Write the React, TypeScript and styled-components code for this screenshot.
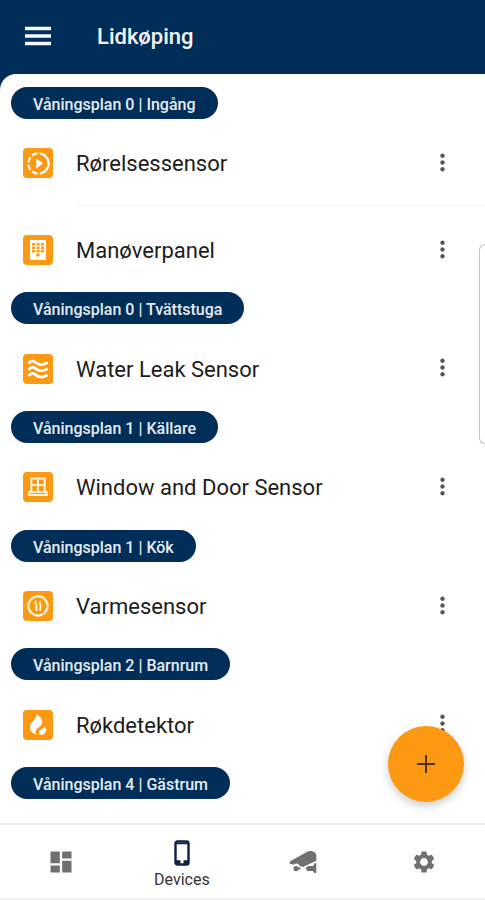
import React from "react";
import styled, { createGlobalStyle } from "styled-components";
import { MdDashboard, MdMoreVert, MdSettings, MdSlowMotionVideo } from "react-icons/md";

const navy = "#002e58";
const orange = "#fb9a12";

const GlobalStyle = createGlobalStyle`
  *, *::before, *::after { box-sizing: border-box; }
  body { margin: 0; background: #fff; font-family: Roboto, sans-serif; }
  button { border: 0; padding: 0; background: none; font: inherit; color: inherit; cursor: pointer; }
  h1, h2, ul { margin: 0; padding: 0; }
  ul { list-style: none; }
  svg { display: block; }
`;

const Screen = styled.div`
  display: flex;
  flex-direction: column;
  min-height: 100vh;
  overflow: hidden;
  background: ${navy};
`;

const Header = styled.header`
  display: flex;
  align-items: center;
  gap: 46px;
  height: 74px;
  padding: 0 25px;
  color: #f6f8fb;
`;

const MenuButton = styled.button`
  display: grid;
  place-items: center;
  width: 26px;
  height: 26px;
`;

const Title = styled.h1`
  font-size: 22px;
  line-height: 28px;
  font-weight: 500;
`;

const Main = styled.main`
  position: relative;
  flex: 1;
  display: flex;
  flex-direction: column;
  padding: 13px 0 24px;
  border-top-left-radius: 16px;
  background: #fff;
`;

const Section = styled.section<{ $rows: number }>`
  display: flex;
  flex-direction: column;
  flex: ${(p) => p.$rows} 0 auto;
`;

const Pill = styled.h2`
  align-self: flex-start;
  height: 32px;
  margin-left: 11px;
  padding: 2px 22px 0;
  border-radius: 16px;
  background: ${navy};
  color: #e6edf3;
  font-size: 16px;
  line-height: 32px;
  font-weight: 500;
`;

const DeviceList = styled.ul`
  flex: 1;
  display: flex;
  flex-direction: column;
`;

const Device = styled.li`
  flex: 1;
  display: flex;
  align-items: center;
  min-height: 86px;
  padding: 2px 30px 0 23px;
`;

const Divider = styled.li`
  height: 1px;
  margin: -1px 0 0 76px;
  background: #f5f5f5;
`;

const Tile = styled.span`
  display: grid;
  place-items: center;
  width: 30px;
  height: 30px;
  margin-right: 23px;
  border-radius: 4px;
  background: ${orange};
  color: #fff;
`;

const DeviceName = styled.span`
  flex: 1;
  padding-top: 2px;
  font-size: 22px;
  line-height: 28px;
  color: #1c1c1c;
`;

const MoreButton = styled.button`
  display: grid;
  place-items: center;
  width: 26px;
  height: 40px;
  padding-bottom: 2px;
  color: #555;
`;

const AddButton = styled.button`
  position: absolute;
  right: 21px;
  bottom: 21px;
  display: grid;
  place-items: center;
  width: 76px;
  height: 76px;
  border-radius: 50%;
  background: ${orange};
  color: #4e2d08;
  box-shadow: 0 4px 8px rgba(0, 0, 0, 0.2);
`;

const SideDrawer = styled.aside`
  position: absolute;
  top: 170px;
  right: 0;
  width: 6px;
  height: 200px;
  border: 1px solid #c4c4c4;
  border-right: 0;
  border-radius: 8px 0 0 8px;
  background: #fff;
`;

const Nav = styled.nav`
  display: grid;
  grid-template-columns: repeat(4, 1fr);
  height: 77px;
  border-top: 2px solid #ebebeb;
  border-bottom: 2px solid #f0f0f0;
  background: #fff;
`;

const NavItem = styled.button<{ $active?: boolean }>`
  display: flex;
  flex-direction: column;
  align-items: center;
  justify-content: center;
  gap: 4px;
  padding-top: ${(p) => (p.$active ? "6px" : "0")};
  color: ${(p) => (p.$active ? "#0b1f47" : "#707070")};
`;

const NavLabel = styled.span`
  font-size: 16px;
  line-height: 20px;
  color: #333;
`;

const MenuIcon = () => (
  <svg width="26" height="26" viewBox="0 0 26 26" stroke="currentColor" strokeWidth="3.6" aria-hidden="true">
    <path d="M0 4.500h26M0 12h26M0 19.500h26" />
  </svg>
);

const KeypadIcon = () => (
  <svg width="18" height="20" viewBox="0 0 18 20" aria-hidden="true">
    <rect x="1" y="0" width="16" height="20" rx="1" fill="currentColor" />
    <g fill={orange}>
      {[3, 6.5, 10].map((y) =>
        [3, 7.4, 11.8].map((x) => <rect key={`${x}-${y}`} x={x} y={y} width="3.2" height="2.4" rx="0.6" />),
      )}
      <rect x="7.4" y="13.6" width="3.2" height="3" rx="0.6" />
    </g>
  </svg>
);

const WavesIcon = () => (
  <svg width="20" height="20" viewBox="0 0 20 20" fill="none" stroke="currentColor" strokeWidth="2.8" aria-hidden="true">
    <path d="M.5 4.600C3 1.400 5.200 1.400 8 3.700S15 6.600 19.500 3.400" />
    <path d="M.5 10.800C3 7.600 5.200 7.600 8 9.900S15 12.800 19.500 9.600" />
    <path d="M.5 17C3 13.800 5.200 13.800 8 16.100S15 19 19.500 15.800" />
  </svg>
);

const WindowIcon = () => (
  <svg width="20" height="20" viewBox="0 0 20 20" fill="none" stroke="#fff3dc" strokeWidth="2" aria-hidden="true">
    <path d="M3.300 15V1.500h13.400V15M10 1.500V15M3.300 8h13.400M1.200 15h17.600v3H1.200z" />
  </svg>
);

const HeatIcon = () => (
  <svg width="22" height="22" viewBox="0 0 22 22" fill="none" stroke="#fff3dc" strokeLinecap="round" aria-hidden="true">
    <circle cx="11" cy="11" r="9.6" strokeWidth="2.2" />
    <path
      strokeWidth="1.9"
      d="M8.800 6.500c-1.800 2.200 1.600 3.500.6 5.700-.5 1.100-.7 1.700.5 3M13 6.500c-1.800 2.200 1.600 3.500.6 5.700-.5 1.100-.9 1.700-.6 3"
    />
  </svg>
);

const FlameIcon = () => (
  <svg width="18" height="22" viewBox="0 0 18 22" fill="currentColor" aria-hidden="true">
    <path d="M7.500 0c.3 3.200-1.600 4.900-3.700 7.300C1.800 9.500.8 11.300 1 13.800c.2 3.200 2.500 5.800 6 6.700-1-2-.6-4.200 1.200-6 1.600-1.600 4.300-2.600 5-5C13.700 5.600 11 2.400 7.500 0z" />
    <path d="M15.300 12c.2 1.600-1 2.300-2.700 3.200-2.200 1.200-3.200 3.200-1.900 5.600 3.300.4 6.100-1 6.400-4.100.2-2-.6-3.600-1.800-4.700z" />
  </svg>
);

const PlusIcon = () => (
  <svg width="20" height="20" viewBox="0 0 20 20" stroke="currentColor" strokeWidth="2" aria-hidden="true">
    <path d="M10 1v18M1 10h18" />
  </svg>
);

const PhoneIcon = () => (
  <svg width="16" height="26" viewBox="0 0 16 26" fill="none" stroke="currentColor" aria-hidden="true">
    <rect x="1.5" y="1.5" width="13" height="23" rx="2" strokeWidth="2.4" />
    <path strokeWidth="3.6" d="M2 22h4.500M9.500 22H14" />
    <path strokeWidth="1.5" d="M2 3.500h12" />
  </svg>
);

const CameraIcon = () => (
  <svg width="28" height="24" viewBox="0 0 28 24" fill="currentColor" aria-hidden="true">
    <path d="M.8 11.600 18.500 1.600C22 .2 27 1.600 27.300 5.500v5.300L14 17l-3.600-1.300c-1-2.700-4-2.800-5.200-.9L.8 13.800z" />
    <circle cx="7" cy="18.6" r="2.6" />
    <path d="M7 17.500h4.500v1.900H7zM16.500 17.800l3-1.800h4.700l1.300-2.800h1.800v9.800h-1.800l-1.800-2h-5.500z" />
  </svg>
);

type DeviceEntry = { name: string; icon: React.ReactNode };
type Room = { label: string; devices: DeviceEntry[] };

const rooms: Room[] = [
  {
    label: "Våningsplan 0 | Ingång",
    devices: [
      { name: "Rørelsessensor", icon: <MdSlowMotionVideo size={27} /> },
      { name: "Manøverpanel", icon: <KeypadIcon /> },
    ],
  },
  { label: "Våningsplan 0 | Tvättstuga", devices: [{ name: "Water Leak Sensor", icon: <WavesIcon /> }] },
  { label: "Våningsplan 1 | Källare", devices: [{ name: "Window and Door Sensor", icon: <WindowIcon /> }] },
  { label: "Våningsplan 1 | Kök", devices: [{ name: "Varmesensor", icon: <HeatIcon /> }] },
  { label: "Våningsplan 2 | Barnrum", devices: [{ name: "Røkdetektor", icon: <FlameIcon /> }] },
  { label: "Våningsplan 4 | Gästrum", devices: [] },
];

export default function App() {
  return (
    <>
      <GlobalStyle />
      <Screen>
        <Header>
          <MenuButton aria-label="Menu">
            <MenuIcon />
          </MenuButton>
          <Title>Lidkøping</Title>
        </Header>
        <Main>
          {rooms.map((room) => (
            <Section key={room.label} $rows={room.devices.length}>
              <Pill>{room.label}</Pill>
              {room.devices.length > 0 && (
                <DeviceList>
                  {room.devices.map((device, i) => (
                    <React.Fragment key={device.name}>
                      {i > 0 && <Divider aria-hidden="true" />}
                      <Device>
                        <Tile>{device.icon}</Tile>
                        <DeviceName>{device.name}</DeviceName>
                        <MoreButton aria-label={`Options for ${device.name}`}>
                          <MdMoreVert size={27} />
                        </MoreButton>
                      </Device>
                    </React.Fragment>
                  ))}
                </DeviceList>
              )}
            </Section>
          ))}
          <SideDrawer />
          <AddButton aria-label="Add device">
            <PlusIcon />
          </AddButton>
        </Main>
        <Nav>
          <NavItem aria-label="Dashboard">
            <MdDashboard size={28} />
          </NavItem>
          <NavItem $active aria-current="page">
            <PhoneIcon />
            <NavLabel>Devices</NavLabel>
          </NavItem>
          <NavItem aria-label="Cameras">
            <CameraIcon />
          </NavItem>
          <NavItem aria-label="Settings">
            <MdSettings size={26} />
          </NavItem>
        </Nav>
      </Screen>
    </>
  );
}
